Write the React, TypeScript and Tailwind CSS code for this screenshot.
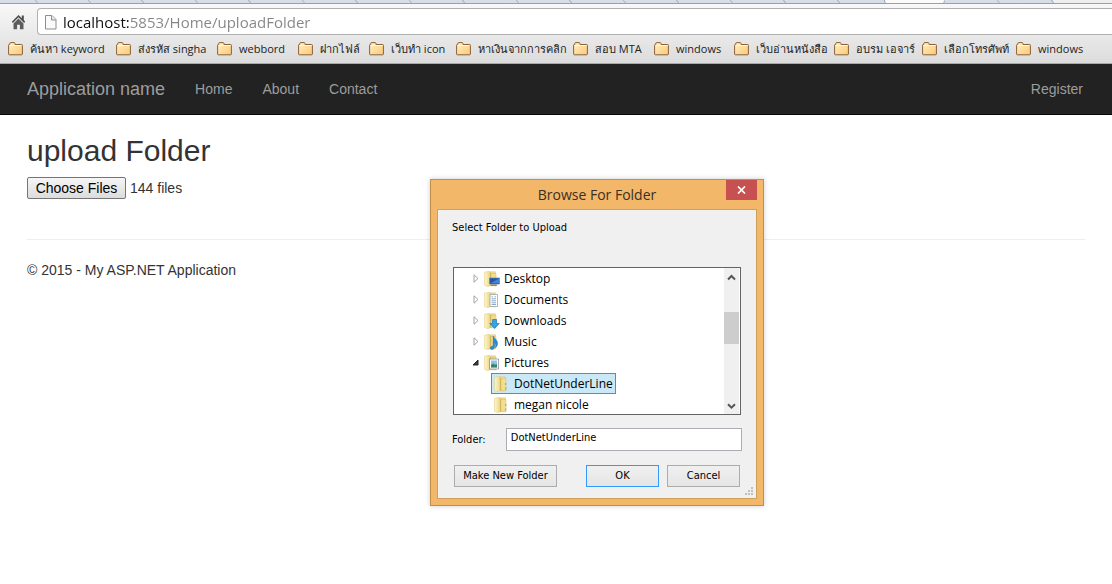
import { useRef, useState } from 'react';

const bookmarks = [
  'ค้นหา keyword',
  'ส่งรหัส singha',
  'webbord',
  'ฝากไฟล์',
  'เว็บทำ icon',
  'หาเงินจากการคลิก',
  'สอบ MTA',
  'windows',
  'เว็บอ่านหนังสือ',
  'อบรม เอจาร์',
  'เลือกโทรศัพท์',
  'windows',
];

const libraries = ['Desktop', 'Documents', 'Downloads', 'Music', 'Pictures'];
const pictureFolders = ['DotNetUnderLine', 'megan nicole'];

function HomeIcon() {
  return (
    <svg width="16" height="16" viewBox="0 0 16 16" className="shrink-0" aria-hidden="true">
      <path d="M7.500 1 .8 7.700l1.100 1.200 5.600-5.600 5.600 5.600 1.100-1.200L12.800 6V1.500h-2v2.700z" fill="#4d4d4d" />
      <path d="M7.500 4.500 2.500 9.500v5.700h3.600v-4.400h2.800v4.400h3.600V9.500z" fill="#5c5c5c" />
    </svg>
  );
}

function PageIcon() {
  return (
    <svg width="12" height="16" viewBox="0 0 12 16" className="shrink-0" aria-hidden="true">
      <path d="M.5 1.500h6.500l4 4v9.500H.5z" fill="#fafafa" stroke="#8e8e8e" />
      <path d="M6.500 1.500v4.500H11" fill="#e8e8e8" stroke="#8e8e8e" />
    </svg>
  );
}

function BookmarkFolder() {
  return (
    <svg width="16" height="14" viewBox="0 0 16 14" className="shrink-0" aria-hidden="true">
      <defs>
        <linearGradient id="bookmark" x1="0" y1="0" x2="1" y2="1">
          <stop offset="0" stopColor="#fff0c8" />
          <stop offset="1" stopColor="#fbc874" />
        </linearGradient>
      </defs>
      <path
        d="M.6 12V3.200q0-.7.7-.7h.5V1.300q0-.7.7-.7h3.600q.7 0 .8.7l.2 1.200h6.500q.8 0 .8.8v8.700q0 .8-.8.8H1.400q-.8 0-.8-.8z"
        fill="url(#bookmark)"
        stroke="#8a6138"
      />
      <path d="M1.500 3.500h12" stroke="#fff8e2" />
    </svg>
  );
}

function FolderIcon({ kind }: { kind?: string }) {
  return (
    <svg width="16" height="16" viewBox="0 0 16 16" className="shrink-0" aria-hidden="true">
      <defs>
        <linearGradient id="cover" x1="0" y1="0" x2="1" y2="0">
          <stop offset="0" stopColor="#fdf6cf" />
          <stop offset="1" stopColor="#ecd787" />
        </linearGradient>
      </defs>
      <path d="M4 .8h7.500v13.700H4z" fill="#efdc92" stroke="#dcc570" strokeWidth=".5" />
      <path d="M7 2.500h5v12.300H7z" fill="#f2dd90" stroke="#d8bf62" strokeWidth=".5" />
      <path d="M.5 1.200 4.600.4l1.600 1.200v13L4.600 15.800.5 14.500z" fill="url(#cover)" stroke="#e0ca78" strokeWidth=".5" />
      <path d="M6.500 1.800v13" stroke="#c9aa4b" strokeWidth=".7" />
      {kind === 'Desktop' && (
        <g>
          <path d="M5.500 7h10v6h-10z" fill="#2456ad" stroke="#6c819f" strokeWidth=".7" />
          <path d="m7 12 8-4.500V12z" fill="#4584d4" />
          <path d="M7 14.200h6" stroke="#596d89" />
        </g>
      )}
      {kind === 'Documents' && (
        <g>
          <path d="M6 2.500h7.500v12H6z" fill="#fff" stroke="#a0a4a8" strokeWidth=".8" />
          <path d="M7.500 4.800h1.500M10.500 4.800H12M7.500 6.800H12M7.500 8.800H12M7.500 10.800H12M7.500 12.500H12" stroke="#7ea0c8" strokeWidth=".9" />
        </g>
      )}
      {kind === 'Downloads' && (
        <path d="M8.500 6.500h4v4h2.700l-4.700 5-4.700-5h2.700z" fill="#35a3e4" stroke="#1e77b7" strokeWidth=".7" />
      )}
      {kind === 'Music' && (
        <path
          d="M9.200 2c.5 2.500 4.800 3.800 4.300 8-.3 2-1.200 3-2 3.500.8-3-.2-4.500-.9-5v4c0 2-1.400 3.200-3 3-2.200-.3-1.700-3.300 1.600-3.600z"
          fill="#278dd6"
          stroke="#176dae"
          strokeWidth=".5"
        />
      )}
      {kind === 'Pictures' && (
        <g>
          <path d="M5.500 4h9v10h-9z" fill="#fff" stroke="#8d9298" strokeWidth=".8" />
          <path d="M7 5.500h6v7H7z" fill="#8ac5e8" />
          <path d="M7 12.500v-2.500l2-1.500 2 1.200 2-.7v3.500z" fill="#3c826d" />
        </g>
      )}
      {!kind && <path d="M11.700 7v2M11.700 11.500v2" stroke="#58aede" />}
    </svg>
  );
}

function Expander({ open }: { open: boolean }) {
  return (
    <svg width="8" height="9" viewBox="0 0 8 9" className="shrink-0" aria-hidden="true">
      {open ? (
        <path d="M6 2v5H1z" fill="#3b3b3b" stroke="#262626" />
      ) : (
        <path d="M2 .8v7.400l4-3.700z" fill="#fff" stroke="#a2a2a2" />
      )}
    </svg>
  );
}

function Chevron({ down }: { down?: boolean }) {
  return (
    <svg width="9" height="7" viewBox="0 0 9 7" aria-hidden="true">
      <path d={down ? 'M1 1.200 4.500 4.700 8 1.200' : 'M1 5.500 4.500 2 8 5.500'} fill="none" stroke="#555" strokeWidth="2" />
    </svg>
  );
}

function TabStrip() {
  const edge = 'h-full skew-x-[35deg] border-r border-[#a0a6b0] bg-[#d6dde6]';
  return (
    <div className="flex h-1 overflow-hidden border-b border-[#9a9fa8] bg-[#d6dde6]" aria-hidden="true">
      <div className="flex w-[884px] shrink-0 overflow-hidden">
        <div className={edge + ' w-[37px] shrink-0'} />
        {Array.from({ length: 15 }, (_, i) => (
          <div key={i} className={edge + ' flex-1'} />
        ))}
        <div className="w-[45px] shrink-0" />
      </div>
      <div className="-mb-px h-1 w-[61px] shrink-0 rounded-b-sm border-x border-[#9a9fa8] bg-[#fafafa]" />
      <div className={edge + ' w-[54px] shrink-0'} />
      <div className={edge + ' w-[54px] shrink-0'} />
      <div className="flex-1 bg-[#eeeeee]" />
    </div>
  );
}

function BrowserChrome() {
  return (
    <header className="border-b border-[#a9a9a9] bg-linear-to-b from-[#fafafa] to-[#dcdcdc] font-['Open_Sans','Noto_Sans',sans-serif]">
      <TabStrip />
      <div className="flex h-[31px] items-center pt-1 pl-[11px]">
        <button type="button" aria-label="Home">
          <HomeIcon />
        </button>
        <div className="ml-2.5 flex h-[27px] flex-1 items-center rounded-l-sm border border-r-0 border-[#b0b0b0] bg-white pl-[7px]">
          <PageIcon />
          <input
            type="text"
            aria-label="Address"
            defaultValue="localhost:5853/Home/uploadFolder"
            className="ml-1.5 h-6 w-full flex-1 bg-[linear-gradient(90deg,#111_66px,#858585_66px)] bg-clip-text text-[15px] text-transparent outline-none"
          />
        </div>
      </div>
      <nav
        aria-label="Bookmarks"
        className="grid h-7 grid-cols-[108px_101px_81px_71px_87px_117px_81px_80px_100px_88px_94px_1fr] items-center pl-2"
      >
        {bookmarks.map((name, i) => (
          <a key={i} href="#" className="flex items-center gap-1.5 text-[11px] whitespace-nowrap text-[#222]">
            <BookmarkFolder />
            {name}
          </a>
        ))}
      </nav>
    </header>
  );
}

function SiteNav() {
  return (
    <nav className="flex h-[51px] items-center justify-between border-b border-[#080808] bg-[#222] pr-[29px] pl-[27px] text-sm text-[#9d9d9d]">
      <div className="flex items-center gap-[30px]">
        <a href="#" className="text-lg">Application name</a>
        <a href="#">Home</a>
        <a href="#">About</a>
        <a href="#">Contact</a>
      </div>
      <a href="#">Register</a>
    </nav>
  );
}

function FileChooser() {
  const input = useRef<HTMLInputElement>(null);
  const [count, setCount] = useState(144);
  return (
    <div className="mt-2.5 flex items-center gap-1">
      <button
        type="button"
        onClick={() => input.current?.click()}
        className="h-[22px] w-[99px] rounded-xs border border-[#757575] bg-linear-to-b from-[#f6f6f6] to-[#dcdcdc] whitespace-nowrap text-black"
      >
        Choose Files
      </button>
      <input
        ref={input}
        type="file"
        multiple
        className="hidden"
        aria-label="Choose files"
        onChange={(e) => setCount(e.target.files?.length ?? 0)}
      />
      <span>{count} files</span>
    </div>
  );
}

function FolderTree() {
  const [selected, setSelected] = useState('DotNetUnderLine');
  return (
    <div className="mt-[30px] ml-px flex h-[148px] w-72 border border-[#646464] bg-white">
      <ul className="flex-1 overflow-hidden font-['Open_Sans','Noto_Sans',sans-serif] text-xs text-black">
        {libraries.map((name) => (
          <li key={name} className="flex h-[21px] items-center pl-[18px]">
            <button type="button" className="flex items-center gap-1">
              <Expander open={name === 'Pictures'} />
              <FolderIcon kind={name} />
              {name}
            </button>
          </li>
        ))}
        {pictureFolders.map((name) => (
          <li key={name} className="flex h-[21px] items-center pl-[37px]">
            <button
              type="button"
              onClick={() => setSelected(name)}
              className={
                'flex h-[21px] items-center gap-1 border px-0.5 ' +
                (name === selected ? 'border-[#26a0da] bg-[#cbe8f6]' : 'border-transparent')
              }
            >
              <FolderIcon />
              {name}
            </button>
          </li>
        ))}
      </ul>
      <div className="mr-px flex w-[15px] flex-col items-center bg-[#f0f0f0]">
        <button type="button" aria-label="Scroll up" className="flex h-[18px] items-center">
          <Chevron />
        </button>
        <div className="mt-[26px] h-8 w-full bg-[#cdcdcd]" />
        <button type="button" aria-label="Scroll down" className="mt-auto flex h-4 items-center">
          <Chevron down />
        </button>
      </div>
    </div>
  );
}

function BrowseDialog() {
  const button = 'h-[22px] border bg-linear-to-b from-[#f0f0f0] to-[#e5e5e5] whitespace-nowrap';
  return (
    <section
      role="dialog"
      aria-labelledby="dialog-title"
      className="absolute top-[179px] left-[430px] w-[334px] border border-[#c08f4b] bg-[#f3b76a] px-1.5 pb-1.5 font-['DejaVu_Sans_Condensed','Open_Sans',sans-serif] text-[11px] text-black shadow-[0_0_5px_rgba(0,0,0,0.2)]"
    >
      <div className="relative flex h-[29px] items-center justify-center">
        <h2 id="dialog-title" className="font-['Open_Sans','Noto_Sans',sans-serif] text-sm text-[#3a2f22]">
          Browse For Folder
        </h2>
        <button
          type="button"
          aria-label="Close"
          className="absolute top-0 right-0 flex h-5 w-[31px] items-center justify-center bg-[#c75050]"
        >
          <svg width="9" height="8" viewBox="0 0 9 8" aria-hidden="true">
            <path d="m1 .5 7 7M8 .5l-7 7" stroke="#fff" strokeWidth="1.700" />
          </svg>
        </button>
      </div>
      <div className="relative h-[290px] border border-[#cf9f5c] bg-[#f0f0f0] pt-2.5 pr-3.5 pl-3.5">
        <p className="h-[17px] leading-4">Select Folder to Upload</p>
        <FolderTree />
        <div className="mt-[13px] flex items-center">
          <label htmlFor="folder" className="w-[54px]">Folder:</label>
          <input
            id="folder"
            type="text"
            defaultValue="DotNetUnderLine"
            className="h-[23px] w-[237px] border border-[#abadb3] bg-white px-1 pb-1 outline-none"
          />
        </div>
        <div className="mt-3.5 ml-0.5 flex">
          <button type="button" className={button + ' w-[103px] border-[#acacac]'}>Make New Folder</button>
          <button type="button" className={button + ' ml-[29px] w-[73px] border-[#3399ff]'}>OK</button>
          <button type="button" className={button + ' ml-2 w-[73px] border-[#acacac]'}>Cancel</button>
        </div>
        <svg width="9" height="9" viewBox="0 0 9 9" className="absolute right-0.5 bottom-0.5" aria-hidden="true">
          <path d="M6 0h2v2H6zM3 3h2v2H3zM6 3h2v2H6zM0 6h2v2H0zM3 6h2v2H3zM6 6h2v2H6z" fill="#bfbfbf" />
        </svg>
      </div>
    </section>
  );
}

export default function App() {
  return (
    <div className="relative min-h-screen bg-white font-['Liberation_Sans',Arial,sans-serif] text-sm text-[#333]">
      <BrowserChrome />
      <SiteNav />
      <main className="px-[27px] pt-[19px]">
        <h1 className="text-3xl leading-[33px]">upload Folder</h1>
        <FileChooser />
        <hr className="mt-10 border-[#eee]" />
        <footer className="mt-5">
          <p>© 2015 - My ASP.NET Application</p>
        </footer>
      </main>
      <BrowseDialog />
    </div>
  );
}
